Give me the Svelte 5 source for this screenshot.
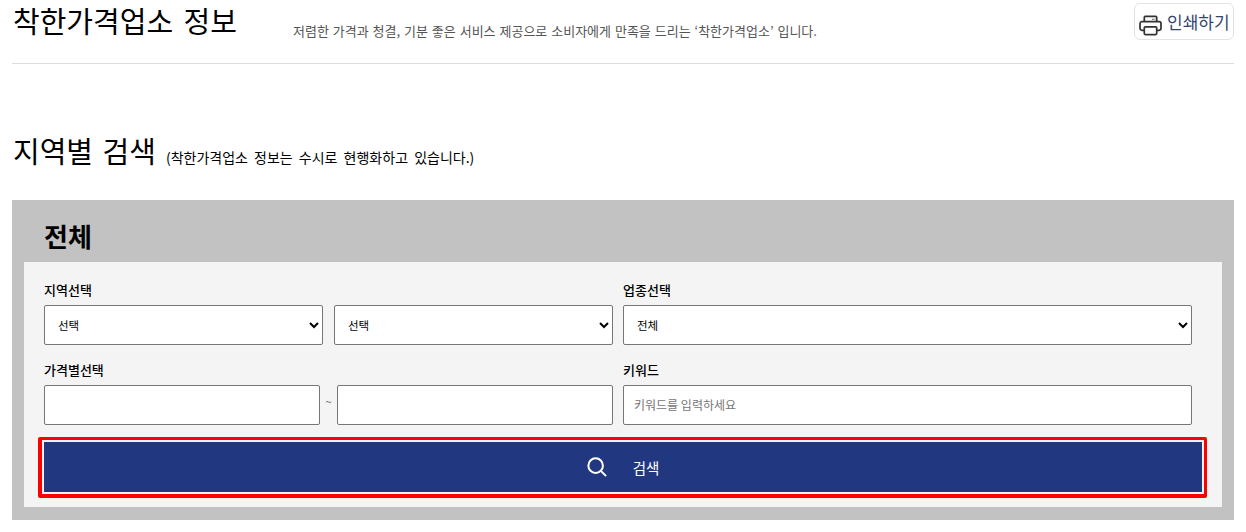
<script>
	let area = $state('');
	let city = $state('');
	let category = $state('');
	let priceFrom = $state('');
	let priceTo = $state('');
	let keyword = $state('');

	function handleSubmit(event) {
		event.preventDefault();
	}
</script>

<div class="container">
	<header class="page-head">
		<h1>착한가격업소 정보</h1>
		<p class="lead">저렴한 가격과 청결, 기분 좋은 서비스 제공으로 소비자에게 만족을 드리는 ‘착한가격업소’ 입니다.</p>
		<button type="button" class="print">
			<svg width="23" height="21" viewBox="0 0 24 22" fill="none" stroke="#333" stroke-width="1.8" aria-hidden="true">
				<path d="M5.500 7V2.500a1 1 0 0 1 1-1h11a1 1 0 0 1 1 1V7" />
				<path d="M5.500 16H3a2 2 0 0 1-2-2V9a2 2 0 0 1 2-2h18a2 2 0 0 1 2 2v5a2 2 0 0 1-2 2h-2.500" />
				<rect x="5.500" y="12.500" width="13" height="8" rx="1" />
				<path d="M13.500 4.500h3.500" stroke-width="1.200" stroke-dasharray="1 0.500" />
			</svg>
			<span>인쇄하기</span>
		</button>
	</header>

	<div class="section-title">
		<h2>지역별 검색</h2>
		<small>(착한가격업소 정보는 수시로 현행화하고 있습니다.)</small>
	</div>

	<section class="search-box">
		<h3>전체</h3>
		<form class="panel" onsubmit={handleSubmit}>
			<div class="fields">
				<div class="field">
					<label for="area">지역선택</label>
					<div class="pair selects">
						<select id="area" bind:value={area}><option value="">선택</option></select>
						<select aria-label="시군구" bind:value={city}><option value="">선택</option></select>
					</div>
				</div>
				<div class="field">
					<label for="category">업종선택</label>
					<select id="category" bind:value={category}><option value="">전체</option></select>
				</div>
				<div class="field">
					<label for="price-from">가격별선택</label>
					<div class="pair prices">
						<input id="price-from" type="text" bind:value={priceFrom} />
						<span class="tilde">~</span>
						<input type="text" aria-label="최대 가격" bind:value={priceTo} />
					</div>
				</div>
				<div class="field">
					<label for="keyword">키워드</label>
					<input id="keyword" type="text" placeholder="키워드를 입력하세요" bind:value={keyword} />
				</div>
			</div>
			<button type="submit" class="submit">
				<svg width="20" height="20" viewBox="0 0 22 22" fill="none" stroke="#fff" stroke-width="2.200" aria-hidden="true">
					<circle cx="9.500" cy="9.500" r="8" />
					<path d="M15.500 15.500l5.500 5.500" />
				</svg>
				<span>검색</span>
			</button>
		</form>
	</section>
</div>

<style>
	:global(body) {
		background: #fff;
	}

	.container {
		padding: 0 12px;
		font-family: "Noto Sans CJK KR", "Noto Sans", sans-serif;
		color: #000;
	}

	.page-head {
		display: flex;
		align-items: flex-start;
		height: 63px;
		border-bottom: 1px solid #ddd;
	}

	h1 {
		margin: 0;
		width: 280px;
		padding-left: 1px;
		font-size: 29px;
		font-weight: 400;
		line-height: 40px;
		word-spacing: 4px;
	}

	.lead {
		margin: 21px 0 0;
		flex: 1;
		font-size: 13px;
		line-height: 20px;
		color: #555;
		word-spacing: 1px;
	}

	.print {
		display: flex;
		align-items: center;
		gap: 5px;
		width: 100px;
		height: 37px;
		margin-top: 3px;
		padding: 0 4px;
		background: #fff;
		border: 1px solid #e3e3e3;
		border-radius: 6px;
		font: inherit;
		font-size: 17px;
		color: #34466f;
		white-space: nowrap;
	}

	.print svg {
		flex: none;
		margin-top: 7px;
	}

	.section-title {
		display: flex;
		align-items: baseline;
		gap: 10px;
		height: 136px;
		box-sizing: border-box;
		padding-top: 65px;
		padding-left: 1px;
	}

	h2 {
		margin: 0;
		font-size: 29px;
		font-weight: 400;
		line-height: 42px;
		word-spacing: 3px;
	}

	small {
		font-size: 14px;
		word-spacing: 3px;
	}

	.search-box {
		height: 320px;
		box-sizing: border-box;
		padding: 0 12px;
		background: #c2c2c2;
	}

	h3 {
		margin: 0;
		height: 62px;
		padding-left: 20px;
		font-size: 26px;
		font-weight: 700;
		line-height: 72px;
	}

	.panel {
		height: 245px;
		box-sizing: border-box;
		padding: 18px 20px 0;
		background: #f4f4f4;
	}

	.fields {
		display: grid;
		grid-template-columns: 569px 569px;
		column-gap: 10px;
		row-gap: 15px;
	}

	.field {
		display: flex;
		flex-direction: column;
	}

	label {
		height: 25px;
		font-size: 13px;
		font-weight: 500;
		line-height: 20px;
	}

	.pair {
		display: flex;
		align-items: center;
	}

	.selects {
		gap: 11px;
	}

	.prices input,
	.selects select {
		flex: 1;
		min-width: 0;
	}

	.tilde {
		width: 17px;
		margin-bottom: 8px;
		text-align: center;
		font-size: 11px;
		color: #666;
	}

	select,
	input {
		height: 40px;
		box-sizing: border-box;
		background-color: #fff;
		border: 1px solid #767676;
		border-radius: 2px;
		font-family: inherit;
		color: #000;
	}

	select {
		padding: 0 9px;
		font-size: 11.5px;
	}

	input {
		padding: 0 10px 2px;
		font-size: 12px;
	}

	input::placeholder {
		color: #757575;
	}

	.submit {
		position: relative;
		display: flex;
		align-items: center;
		justify-content: center;
		gap: 26px;
		width: 1158px;
		height: 50px;
		margin-top: 17px;
		background: #213881;
		border: 0;
		font-family: inherit;
		font-size: 14.5px;
		color: #fff;
	}

	/* red highlight drawn over the button */
	.submit::after {
		content: '';
		position: absolute;
		inset: -5px -5px -6px -6px;
		border: solid #f00;
		border-width: 3px 3px 4px 4px;
		border-radius: 2px;
	}
</style>
